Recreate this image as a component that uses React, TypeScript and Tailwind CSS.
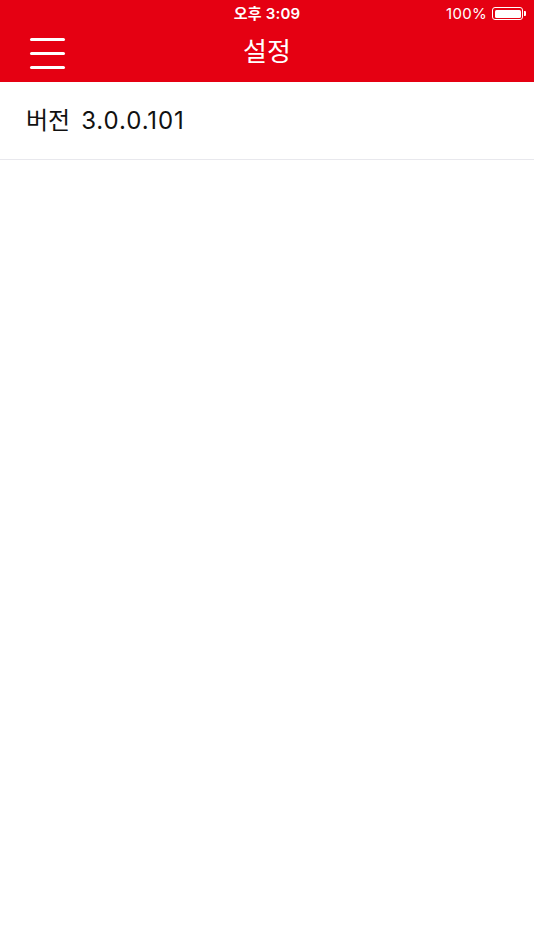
import React from "react";

export default function App() {
  return (
    <div
      className="w-[534px] h-[950px] bg-white overflow-hidden"
      style={{ fontFamily: 'Inter, "Noto Sans CJK KR", sans-serif' }}
    >
      <div className="bg-[#e50012] h-[82px] flex flex-col">
        <div className="h-[27px] relative flex items-center justify-center text-white">
          <span className="text-[15px] font-semibold leading-none tracking-[0.2px]">오후 3:09</span>
          <div className="absolute right-[8px] top-0 h-[27px] flex items-center gap-[5px]">
            <span className="text-[15px] leading-none tracking-[0.3px]">100%</span>
            <div className="flex items-center">
              <div className="w-[31px] h-[13px] rounded-[3px] border border-white p-[1.5px]">
                <div className="w-full h-full bg-white rounded-[1.5px]" />
              </div>
              <div className="w-[2px] h-[5px] bg-white rounded-r-[1px] ml-[1px]" />
            </div>
          </div>
        </div>
        <div className="flex-1 relative flex items-center justify-center">
          <div className="absolute left-[30px] top-[11px] flex flex-col gap-[11px]">
            <div className="w-[35px] h-[3px] bg-white rounded-full" />
            <div className="w-[35px] h-[3px] bg-white rounded-full" />
            <div className="w-[35px] h-[3px] bg-white rounded-full" />
          </div>
          <span className="text-white text-[26px] leading-none -mt-[5px]">설정</span>
        </div>
      </div>
      <div className="h-[78px] flex items-center pl-[26px] border-b border-[#e8e8ed]">
        <span className="text-[24px] text-[#111] leading-none">버전</span>
        <span className="text-[24px] text-[#111] leading-none ml-[11px] tracking-[0.9px]">3.0.0.101</span>
      </div>
    </div>
  );
}
